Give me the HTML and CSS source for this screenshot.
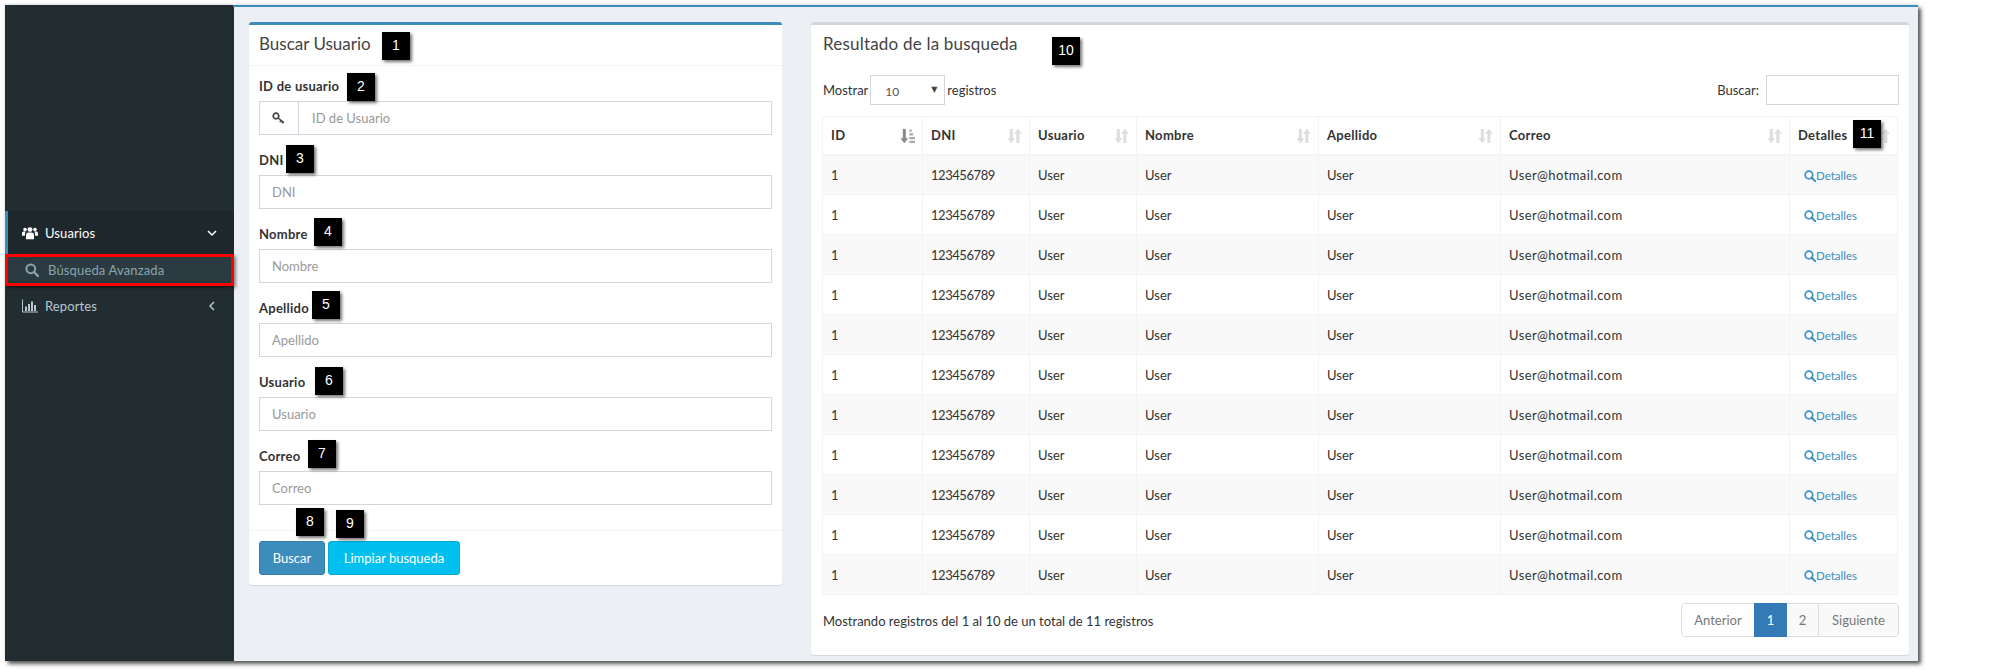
FILE: index.html
```html
<!DOCTYPE html>
<html lang="es">
<head>
<meta charset="utf-8">
<title>Buscar Usuario</title>
<link rel="stylesheet" href="styles.css">
</head>
<body>
<svg class="defs" width="0" height="0" aria-hidden="true">
  <symbol id="i-sort" viewBox="0 0 16 16"><path d="M3 .5h3.200v10h2.600L4.600 15.800.4 10.500H3zM7.400 5.500 11.600.2 15.800 5.500h-2.600v10H10v-10z"/></symbol>
  <symbol id="i-search" viewBox="0 0 14 14"><circle cx="5.800" cy="5.800" r="4.400" fill="none" stroke="currentColor" stroke-width="2"/><path d="M9 9l4 4" stroke="currentColor" stroke-width="2.400" stroke-linecap="round"/></symbol>
</svg>
<div class="window">
  <aside class="sidebar">
    <ul class="menu">
      <li class="menu-item active">
        <svg class="menu-icon" viewBox="0 0 18 14"><g fill="#fff"><circle cx="9" cy="3.200" r="2.800"/><path d="M4.500 14V9.300C4.500 7.500 6 6.500 7 6.500h4c1 0 2.500 1 2.500 2.800V14z"/><circle cx="3.400" cy="3" r="2"/><circle cx="14.600" cy="3" r="2"/><path d="M0 10V7c0-1.200 1-1.800 2-1.800h2.200C3.500 6.200 3.300 7.500 3.300 10zM18 10V7c0-1.200-1-1.800-2-1.800h-2.200c.7 1 .9 2.300.9 4.800z"/></g></svg>
        <span class="menu-text">Usuarios</span>
        <svg class="chev" viewBox="0 0 10 10"><path d="M1 3l4 4 4-4" fill="none" stroke="currentColor" stroke-width="1.500"/></svg>
      </li>
      <li class="sub-item">
        <svg class="sub-icon"><use href="#i-search"/></svg>
        <span class="sub-text">Búsqueda Avanzada</span>
      </li>
      <li class="menu-item">
        <svg class="menu-icon" viewBox="0 0 16 13"><path d="M.5 0v12.500H16" fill="none" stroke="currentColor"/><path fill="currentColor" d="M3 7h2v4.500H3zM6 4.500h2v7H6zM9 2h2v9.500H9zM12 5.500h2v6h-2z"/></svg>
        <span class="menu-text">Reportes</span>
        <svg class="chev" viewBox="0 0 10 10"><path d="M7 1L3 5l4 4" fill="none" stroke="currentColor" stroke-width="1.500"/></svg>
      </li>
    </ul>
  </aside>

  <main class="content">
    <section class="box box-primary search-box">
      <h3 class="box-head">Buscar Usuario</h3>
      <form class="box-body">
        <div class="field">
          <label>ID de usuario</label>
          <div class="input-group">
            <span class="addon"><svg class="key" viewBox="0 0 14 12"><circle cx="4" cy="4" r="2.800" fill="none" stroke="#444" stroke-width="1.700"/><path d="M6 6l6 4.500M9 8.500l-1.200 1.600M11 9.800l-1 1.400" fill="none" stroke="#444" stroke-width="1.500"/></svg></span>
            <input class="control joined" placeholder="ID de Usuario">
          </div>
        </div>
        <div class="field"><label>DNI</label><input class="control" placeholder="DNI"></div>
        <div class="field"><label>Nombre</label><input class="control" placeholder="Nombre"></div>
        <div class="field"><label>Apellido</label><input class="control" placeholder="Apellido"></div>
        <div class="field"><label>Usuario</label><input class="control" placeholder="Usuario"></div>
        <div class="field"><label>Correo</label><input class="control" placeholder="Correo"></div>
      </form>
      <div class="box-foot">
        <button class="btn btn-primary" type="button">Buscar</button>
        <button class="btn btn-info" type="button">Limpiar busqueda</button>
      </div>
    </section>

    <section class="box results-box">
      <h3 class="results-title">Resultado de la busqueda</h3>
      <div class="tools">
        <div class="length">Mostrar <span class="select-wrap"><select class="length-select"><option>10</option></select></span> registros</div>
        <div class="filter">Buscar: <input class="filter-input"></div>
      </div>
      <table class="grid">
        <thead>
          <tr>
            <th>ID<svg class="sort" viewBox="0 0 16 16"><path fill="#888" d="M3 .5h3.200v10h2.600L4.600 15.800.4 10.500H3z"/><path fill="#aaa" d="M10 1h2.500v2.500H10zM10 5h4v2.500h-4zM10 9h6v2.500h-6zM10 13h6v2.500h-6z"/></svg></th>
            <th>DNI<svg class="sort"><use href="#i-sort"/></svg></th>
            <th>Usuario<svg class="sort"><use href="#i-sort"/></svg></th>
            <th>Nombre<svg class="sort"><use href="#i-sort"/></svg></th>
            <th>Apellido<svg class="sort"><use href="#i-sort"/></svg></th>
            <th>Correo<svg class="sort"><use href="#i-sort"/></svg></th>
            <th>Detalles<svg class="sort"><use href="#i-sort"/></svg></th>
          </tr>
        </thead>
        <tbody>
          <tr><td>1</td><td>123456789</td><td>User</td><td>User</td><td>User</td><td>User@hotmail.com</td><td class="detail"><a href="#"><svg class="detail-icon"><use href="#i-search"/></svg>Detalles</a></td></tr>
          <tr><td>1</td><td>123456789</td><td>User</td><td>User</td><td>User</td><td>User@hotmail.com</td><td class="detail"><a href="#"><svg class="detail-icon"><use href="#i-search"/></svg>Detalles</a></td></tr>
          <tr><td>1</td><td>123456789</td><td>User</td><td>User</td><td>User</td><td>User@hotmail.com</td><td class="detail"><a href="#"><svg class="detail-icon"><use href="#i-search"/></svg>Detalles</a></td></tr>
          <tr><td>1</td><td>123456789</td><td>User</td><td>User</td><td>User</td><td>User@hotmail.com</td><td class="detail"><a href="#"><svg class="detail-icon"><use href="#i-search"/></svg>Detalles</a></td></tr>
          <tr><td>1</td><td>123456789</td><td>User</td><td>User</td><td>User</td><td>User@hotmail.com</td><td class="detail"><a href="#"><svg class="detail-icon"><use href="#i-search"/></svg>Detalles</a></td></tr>
          <tr><td>1</td><td>123456789</td><td>User</td><td>User</td><td>User</td><td>User@hotmail.com</td><td class="detail"><a href="#"><svg class="detail-icon"><use href="#i-search"/></svg>Detalles</a></td></tr>
          <tr><td>1</td><td>123456789</td><td>User</td><td>User</td><td>User</td><td>User@hotmail.com</td><td class="detail"><a href="#"><svg class="detail-icon"><use href="#i-search"/></svg>Detalles</a></td></tr>
          <tr><td>1</td><td>123456789</td><td>User</td><td>User</td><td>User</td><td>User@hotmail.com</td><td class="detail"><a href="#"><svg class="detail-icon"><use href="#i-search"/></svg>Detalles</a></td></tr>
          <tr><td>1</td><td>123456789</td><td>User</td><td>User</td><td>User</td><td>User@hotmail.com</td><td class="detail"><a href="#"><svg class="detail-icon"><use href="#i-search"/></svg>Detalles</a></td></tr>
          <tr><td>1</td><td>123456789</td><td>User</td><td>User</td><td>User</td><td>User@hotmail.com</td><td class="detail"><a href="#"><svg class="detail-icon"><use href="#i-search"/></svg>Detalles</a></td></tr>
          <tr><td>1</td><td>123456789</td><td>User</td><td>User</td><td>User</td><td>User@hotmail.com</td><td class="detail"><a href="#"><svg class="detail-icon"><use href="#i-search"/></svg>Detalles</a></td></tr>
        </tbody>
      </table>
      <div class="table-foot">
        <div class="info">Mostrando registros del 1 al 10 de un total de 11 registros</div>
        <ul class="pager">
          <li class="pg-prev">Anterior</li>
          <li class="pg-current">1</li>
          <li class="pg-two">2</li>
          <li class="pg-next">Siguiente</li>
        </ul>
      </div>
    </section>
  </main>

  <div class="outline"></div>
  <span class="badge b1">1</span>
  <span class="badge b2">2</span>
  <span class="badge b3">3</span>
  <span class="badge b4">4</span>
  <span class="badge b5">5</span>
  <span class="badge b6">6</span>
  <span class="badge b7">7</span>
  <span class="badge b8">8</span>
  <span class="badge b9">9</span>
  <span class="badge b10">10</span>
  <span class="badge b11">11</span>
</div>
</body>
</html>
```
FILE: styles.css
```css
* { box-sizing: border-box; }
html, body { margin: 0; padding: 0; background: #fff; }
body {
  font-family: "Lato", "Liberation Sans", sans-serif;
  font-size: 13px;
  color: #333;
  width: 2011px;
  height: 670px;
  overflow: hidden;
  padding: 5px 0 0 5px;
}
.defs { position: absolute; }

.window {
  position: relative;
  display: flex;
  width: 1913px;
  height: 656px;
  background: #ecf0f5;
  box-shadow: 3px 3px 4px rgba(0, 0, 0, .65), 0 -1px 3px rgba(0, 0, 0, .12);
}

/* Sidebar */
.sidebar { width: 229px; flex: none; background: #222d32; padding-top: 206px; }
.menu { list-style: none; margin: 0; padding: 0; }
.menu-item {
  display: flex;
  align-items: center;
  height: 43px;
  padding: 0 17px 0 0;
  color: #b8c7ce;
  border-left: 3px solid transparent;
}
.menu-item.active { background: #1e282c; color: #fff; border-left-color: #3c8dbc; }
.menu-item + .sub-item + .menu-item { height: 42px; }
.menu-icon { width: 16px; height: 14px; margin-left: 14px; margin-right: 7px; flex: none; }
.menu-text { flex: 1; letter-spacing: .1px; }
.chev { width: 10px; height: 10px; flex: none; }
.sub-item {
  display: flex;
  align-items: center;
  height: 31px;
  padding-left: 20px;
  background: #2c3b41;
  color: #8aa4af;
  box-shadow: inset 0 0 4px rgba(0, 0, 0, .5);
}
.sub-text { letter-spacing: .15px; }
.sub-icon { width: 14px; height: 14px; margin-right: 9px; color: #8aa4af; }

.outline {
  position: absolute;
  left: 0;
  top: 249px;
  width: 229px;
  height: 32px;
  border: 3px solid #f00;
  box-shadow: 2px 2px 3px rgba(0, 0, 0, .45);
}

/* Content */
.content {
  flex: 1;
  display: flex;
  align-items: flex-start;
  gap: 29px;
  padding: 15px 0 0 16px;
  border-top: 2px solid #3c8dbc;
  margin-left: -1px;
}
.box {
  background: #fff;
  border-top: 3px solid #d2d6de;
  border-radius: 3px;
  box-shadow: 0 1px 1px rgba(0, 0, 0, .1);
}
.box-primary { border-top-color: #3c8dbc; }
.search-box { width: 533px; height: 563px; }
.box-head {
  margin: 0;
  height: 41px;
  padding: 0 10px;
  font-size: 17px;
  font-weight: 400;
  line-height: 38px;
  color: #444;
  border-bottom: 1px solid #f4f4f4;
}
.box-body { padding: 10px; }
.field { margin-bottom: 15px; }
.field label { display: block; height: 20px; line-height: 20px; margin-bottom: 5px; font-weight: 700; color: #333; letter-spacing: .25px; }
.control {
  display: block;
  width: 100%;
  height: 34px;
  padding: 6px 12px;
  border: 1px solid #d2d6de;
  background: #fff;
  font: inherit;
  color: #555;
  outline: none;
  border-radius: 0;
}
.control::placeholder { color: #999; opacity: 1; }
.input-group { display: flex; }
.addon {
  width: 39px;
  height: 34px;
  flex: none;
  display: flex;
  align-items: center;
  justify-content: center;
  border: 1px solid #d2d6de;
  border-right: 0;
}
.key { width: 14px; height: 12px; margin-top: -1px; }
.joined { flex: 1; padding-left: 13px; }
.box-foot { border-top: 1px solid #f4f4f4; padding: 10px; display: flex; gap: 3px; }
.btn {
  height: 34px;
  padding: 0 12px;
  border: 1px solid transparent;
  border-radius: 3px;
  font: inherit;
  color: #fff;
}
.btn-primary { width: 66px; background: #3c8dbc; border-color: #367fa9; }
.btn-info { width: 132px; background: #00c0ef; border-color: #00acd6; }

.results-box { width: 1098px; height: 633px; padding: 0 10px; }
.results-title { margin: 0; height: 50px; padding: 7px 0 0 2px; font-size: 17px; font-weight: 400; line-height: 24px; color: #444; letter-spacing: .2px; }
.tools { display: flex; justify-content: space-between; align-items: center; height: 30px; margin-bottom: 11px; padding-left: 2px; }
.length { display: flex; align-items: center; gap: 2px; }
.select-wrap { position: relative; display: block; width: 75px; height: 30px; }
.select-wrap::after {
  content: "▼";
  position: absolute;
  right: 8px;
  top: 9px;
  font: 8px/12px "DejaVu Sans", sans-serif;
  color: #444;
  pointer-events: none;
}
.length-select {
  appearance: none;
  display: block;
  width: 75px;
  height: 30px;
  padding: 2px 14px 0;
  border: 1px solid #d2d6de;
  border-radius: 0;
  background: #fff;
  font: 12px "Lato", sans-serif;
  color: #555;
}
.filter { display: flex; align-items: center; gap: 7px; }
.filter-input { width: 133px; height: 30px; border: 1px solid #d2d6de; background: #fff; outline: none; }

.grid { border-collapse: collapse; table-layout: fixed; width: 1076px; margin-left: 1px; }
.grid th, .grid td { border: 1px solid #f4f4f4; padding: 0 8px; text-align: left; }
.grid th { position: relative; height: 38px; font-weight: 700; border-bottom-width: 2px; letter-spacing: .3px; }
.grid td { height: 40px; }
.grid td:nth-child(2) { letter-spacing: -.45px; }
.grid td:nth-child(6) { letter-spacing: .4px; }
.grid tbody tr:nth-child(odd) { background: #f9f9f9; }
.grid th:nth-child(1) { width: 100px; }
.grid th:nth-child(2), .grid th:nth-child(3) { width: 107px; }
.grid th:nth-child(4), .grid th:nth-child(5) { width: 182px; }
.grid th:nth-child(6) { width: 289px; }
.grid th:nth-child(7) { width: 108px; }
.sort { position: absolute; right: 7px; top: 11px; width: 15px; height: 16px; fill: #ddd; }
.detail { font-size: 11.500px; }
.detail.detail { padding-left: 14px; }
.detail a { color: #3c8dbc; text-decoration: none; display: flex; align-items: center; padding-top: 2px; }
.detail-icon { width: 12px; height: 12px; }

.table-foot { display: flex; justify-content: space-between; align-items: flex-start; margin-top: 8px; }
.info { padding: 8px 0 0 2px; line-height: 20px; }
.pager {
  list-style: none;
  margin: 0;
  padding: 0;
  display: flex;
  height: 34px;
  line-height: 32px;
  color: #777;
  border: 1px solid #ddd;
  border-radius: 4px;
}
.pager li { text-align: center; }
.pg-prev { width: 72px; }
.pg-current { width: 33px; margin: -1px 0; height: 34px; line-height: 34px; background: #337ab7; color: #fff; }
.pg-two { width: 32px; background: #f9f9f9; border-right: 1px solid #ddd; }
.pg-next { width: 79px; background: #f9f9f9; border-radius: 0 3px 3px 0; }

/* Annotation markers */
.badge {
  position: absolute;
  width: 28px;
  height: 28px;
  background: #000;
  color: #fff;
  font: 14px/26px "Liberation Sans", sans-serif;
  text-align: center;
  box-shadow: 2px 2px 3px rgba(0, 0, 0, .55);
}
.b1 { left: 377px; top: 27px; }
.b2 { left: 342px; top: 68px; }
.b3 { left: 281px; top: 140px; }
.b4 { left: 309px; top: 213px; }
.b5 { left: 307px; top: 286px; }
.b6 { left: 310px; top: 362px; }
.b7 { left: 303px; top: 435px; }
.b8 { left: 291px; top: 503px; }
.b9 { left: 331px; top: 505px; }
.b10 { left: 1047px; top: 32px; }
.b11 { left: 1848px; top: 115px; }
```
